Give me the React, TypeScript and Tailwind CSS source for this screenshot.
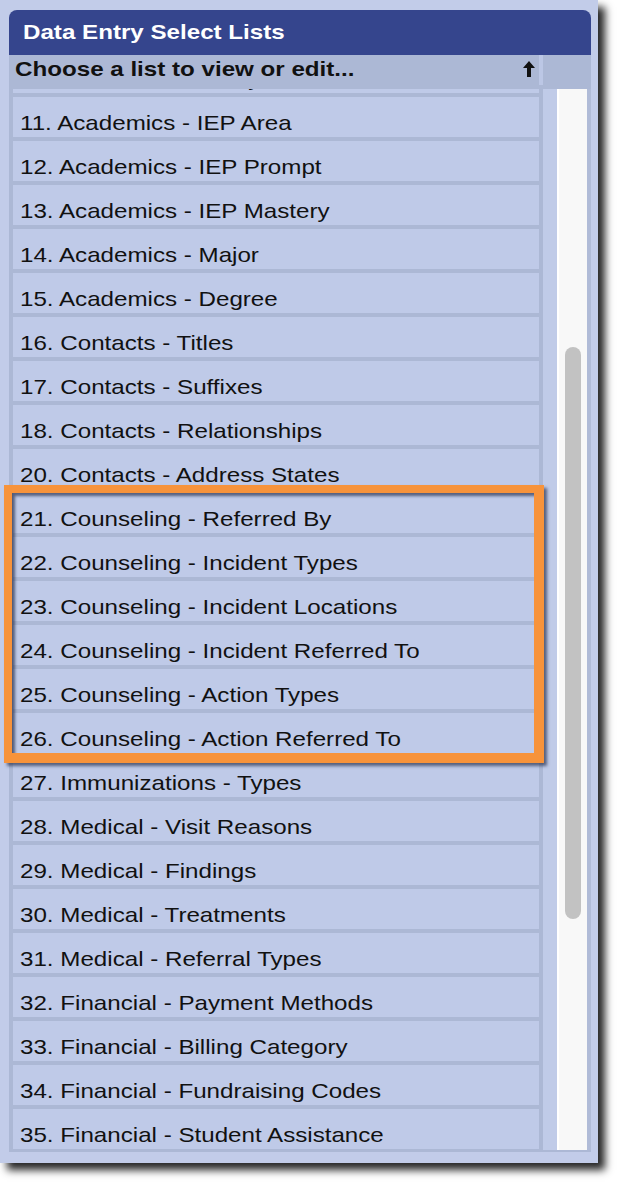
import React from "react";

const rows = [
  "11. Academics - IEP Area",
  "12. Academics - IEP Prompt",
  "13. Academics - IEP Mastery",
  "14. Academics - Major",
  "15. Academics - Degree",
  "16. Contacts - Titles",
  "17. Contacts - Suffixes",
  "18. Contacts - Relationships",
  "20. Contacts - Address States",
  "21. Counseling - Referred By",
  "22. Counseling - Incident Types",
  "23. Counseling - Incident Locations",
  "24. Counseling - Incident Referred To",
  "25. Counseling - Action Types",
  "26. Counseling - Action Referred To",
  "27. Immunizations - Types",
  "28. Medical - Visit Reasons",
  "29. Medical - Findings",
  "30. Medical - Treatments",
  "31. Medical - Referral Types",
  "32. Financial - Payment Methods",
  "33. Financial - Billing Category",
  "34. Financial - Fundraising Codes",
  "35. Financial - Student Assistance",
];

function RowText({ text }: { text: string }) {
  return (
    <span className="inline-block origin-left scale-x-[1.15] whitespace-pre text-[21px] leading-[21px] text-[#111]">
      {text}
    </span>
  );
}

function Row({ text }: { text: string }) {
  return (
    <div className="h-[40px] shrink-0 bg-[#bfcae8] pl-[7px] pt-[15px]">
      <RowText text={text} />
    </div>
  );
}

export default function App() {
  return (
    <div
      className="min-h-screen bg-white"
      style={{ fontFamily: '"Liberation Sans", Arial, Helvetica, sans-serif' }}
    >
      <div className="relative h-[1163px] w-[598px] bg-[#c2cce9] pl-[9px] pt-[10px] shadow-[7px_7px_8px_rgba(0,0,0,0.85)]">
        <div className="flex w-[582px] flex-col">
          {/* Header */}
          <div className="h-[45px] rounded-t-[8px] bg-[#35458d] pl-[14px] pt-[11px]">
            <span className="inline-block origin-left scale-x-[1.15] whitespace-pre text-[21px] font-bold leading-[21px] text-white">
              Data Entry Select Lists
            </span>
          </div>

          {/* Sub header */}
          <div className="flex h-[34px] bg-[#acb8d5]">
            <div className="flex h-[30px] w-[530px] items-start justify-between pl-[6px] pr-[4px] pt-[3px]">
              <span className="inline-block origin-left scale-x-[1.15] whitespace-pre text-[21px] font-bold leading-[21px] text-[#111]">
                Choose a list to view or edit...
              </span>
              <svg
                width="12"
                height="16"
                viewBox="0 0 12 16"
                className="mt-[3px]"
              >
                <path d="M6 0 L12 7 L8 7 L8 16 L4 16 L4 7 L0 7 Z" fill="#111" />
              </svg>
            </div>
            <div className="h-[30px] w-[4px] bg-[#bcc7e5]" />
          </div>

          {/* List area */}
          <div className="flex h-[1063px] bg-[#acb8d5] pb-[2px]">
            <div className="flex w-[534px] flex-col gap-[4px] overflow-hidden px-[4px]">
              <div className="flex h-[4px] shrink-0 flex-col justify-end overflow-hidden">
                <Row text="10. Academics - Study Hall" />
              </div>
              {rows.map((r) => (
                <Row key={r} text={r} />
              ))}
            </div>
            <div className="w-[14px] bg-[#c0cbe8]" />
            <div className="flex w-[30px] flex-col items-center border-l-2 border-white bg-[#f8f8f8]">
              <div className="mt-[258px] h-[572px] w-[16px] rounded-full bg-[#c2c2c2]" />
            </div>
            <div className="w-[4px] bg-[#b0bbd7]" />
          </div>
        </div>

        {/* Highlight overlay */}
        <div className="absolute left-[4px] top-[485px] h-[278px] w-[540px] border-b-[10px] border-l-[8px] border-r-[10px] border-t-[8px] border-[#f7933b] shadow-[inset_3px_3px_3px_rgba(40,50,80,0.7),3px_3px_3px_rgba(40,50,80,0.7)]" />
      </div>
    </div>
  );
}
